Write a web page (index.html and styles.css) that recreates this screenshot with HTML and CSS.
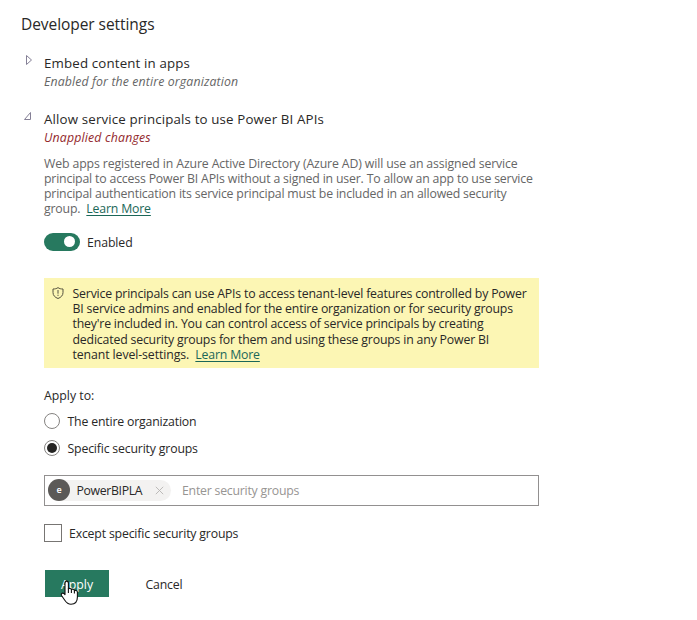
FILE: index.html
```html
<!DOCTYPE html>
<html lang="en">
<head>
<meta charset="utf-8">
<title>Developer settings</title>
<link rel="stylesheet" href="styles.css">
</head>
<body>
<main class="settings">
  <h1 class="title">Developer settings</h1>
  <section class="setting collapsed">
    <svg class="arrow" width="10" height="12" viewBox="0 0 10 12"><path d="M2.5 1.5v9L7.5 6z"/></svg>
    <div>
      <h2 class="name">Embed content in apps</h2>
      <p class="status">Enabled for the entire organization</p>
    </div>
  </section>
  <section class="setting">
    <svg class="arrow open" width="10" height="12" viewBox="0 0 10 12"><path d="M1.5 8.5h6v-7z"/></svg>
    <div class="body">
      <h2 class="name">Allow service principals to use Power BI APIs</h2>
      <p class="status changed">Unapplied changes</p>
      <p class="description"><span class="first-line">Web apps registered in Azure Active Directory (Azure AD) will use an assigned service</span><br>principal to access Power BI APIs without a signed in user. To allow an app to use service<br>principal authentication its service principal must be included in an allowed security<br>group. &nbsp;<a class="link" href="#">Learn More</a></p>
      <div class="toggle-row"><span class="toggle"></span><span class="label">Enabled</span></div>
      <div class="notice">
        <svg class="shield" width="12" height="12" viewBox="0 0 12 12"><path d="M6 .6C4.6 1.7 3 2 1 2v3.5c0 3 2 4.9 5 6 3-1.1 5-3 5-6V2C9 2 7.4 1.7 6 .6zM6 3v3.7M6 7.7v1.2"/></svg>
        <p class="notice-text">Service principals can use APIs to access tenant-level features controlled by Power<br>BI service admins and enabled for the entire organization or for security groups<br>they're included in. You can control access of service principals by creating<br>dedicated security groups for them and using these groups in any Power BI<br><span class="last-line">tenant level-settings. &nbsp;</span><a class="link" href="#">Learn More</a></p>
      </div>
      <p class="apply-to">Apply to:</p>
      <div class="choice"><span class="radio"></span><span class="label">The entire organization</span></div>
      <div class="choice"><span class="radio selected"></span><span class="label">Specific security groups</span></div>
      <div class="picker">
        <span class="chip"><span class="avatar">e</span><span class="chip-name">PowerBIPLA</span><svg width="9" height="9" viewBox="0 0 9 9"><path d="M.8.8l7.4 7.4M8.2.8L.8 8.2"/></svg></span>
        <span class="placeholder">Enter security groups</span>
      </div>
      <div class="except"><span class="checkbox"></span><span class="label">Except specific security groups</span></div>
      <div class="actions">
        <span class="button">Apply</span>
        <span class="cancel">Cancel</span>
        <svg class="cursor" width="20" height="26" viewBox="0 0 20 26"><path d="M5 14V3.2C5 .4 8.4 .4 8.4 3.2V9C9.2 7.9 11.2 8.3 11.4 9.7C12.3 8.7 14.3 9.2 14.4 10.7C15.5 9.9 17.4 10.6 17.4 12.3V17C17.4 21.5 14.8 24.200 11 24.200C7.5 24.200 6.300 22.500 4.800 20.200L1.500 15.500C.6 13.400 2.900 12 5 14.600Z"/><path d="M8.4 8.5V13M11.4 9.7V13M14.4 10.7V13.5"/></svg>
      </div>
    </div>
  </section>
</main>
</body>
</html>
```
FILE: styles.css
```css
* { box-sizing: border-box; }
body { margin: 0; min-height: 100vh; background: #fff; color: #292827; font: 12.3px/15px "Open Sans", "Noto Sans", sans-serif; letter-spacing: -.18px; }
h1, h2, p { margin: 0; font-weight: 400; }
.settings { padding: 12px 0 22px 21px; }
.title { font-size: 15.5px; line-height: 24px; letter-spacing: -.06px; }
.setting { display: flex; align-items: flex-start; }
.collapsed { margin: 17px 0 18px; height: 38px; }
.arrow { width: 10px; margin: 1px 10px 0 3px; fill: none; stroke: #858096; flex: none; }
.open { margin: 2px 11px 0 2px; }
.name { font-size: 13.3px; line-height: 20px; letter-spacing: .15px; white-space: nowrap; }
.status { color: #666; font-style: italic; line-height: 16px; padding-top: 1px; letter-spacing: .13px; white-space: nowrap; }
.changed { color: #93282c; letter-spacing: .18px; }
.body { width: 495px; }
.description { margin-top: 10px; color: #666; line-height: 15.1px; white-space: nowrap; }
.first-line { letter-spacing: -.13px; }
.link { color: #1b6758; text-underline-offset: 2px; }
.toggle-row { display: flex; align-items: center; gap: 7px; height: 18px; margin-top: 16.6px; }
.label { padding-top: 2px; }
.toggle { width: 36px; height: 18px; border-radius: 9px; background: #27795f; display: flex; align-items: center; justify-content: flex-end; padding-right: 5px; }
.toggle-row .label { letter-spacing: -.1px; }
.toggle::after { content: ""; width: 11px; height: 11px; border-radius: 50%; background: #fff; }
.notice { display: flex; margin-top: 27px; height: 90px; padding: 8px 0 0 8px; background: #fcf6b4; }
.shield { margin: 1px 8.5px 0 0; fill: none; stroke: #55523e; flex: none; }
.notice-text { line-height: 15.25px; letter-spacing: -.18px; white-space: nowrap; }
.last-line { letter-spacing: -.1px; }
.apply-to { margin-top: 20px; letter-spacing: 0; }
.choice { display: flex; align-items: center; gap: 7.5px; height: 16px; margin-top: 10px; }
.radio { width: 16px; height: 16px; border: 1px solid #858381; border-radius: 50%; display: grid; place-items: center; }
.choice + .choice { margin-top: 11px; }
.selected::after { content: ""; width: 10px; height: 10px; border-radius: 50%; background: #252423; }
.picker { display: flex; align-items: center; height: 31px; margin-top: 19px; padding-left: 3px; border: 1px solid #929090; }
.chip { display: flex; align-items: center; width: 123px; height: 21px; border-radius: 11px; background: #f3f2f1; }
.avatar { width: 22px; height: 22px; border-radius: 50%; background: #5b5957; color: #fff; font-size: 9px; font-weight: 600; line-height: 21px; text-align: center; }
.chip-name { width: 66px; margin: 0 12px 0 6.5px; letter-spacing: -.35px; }
.chip svg { fill: none; stroke: #b5b3b1; stroke-width: .9; }
.placeholder { margin-left: 11px; color: #979593; letter-spacing: -.23px; }
.except { display: flex; align-items: center; gap: 7px; margin-top: 18px; height: 18px; }
.checkbox { width: 18px; height: 18px; border: 1px solid #777573; }
.actions { position: relative; display: flex; align-items: center; margin: 28px 0 0 1px; height: 27px; }
.button { width: 64px; height: 27px; background: #27795f; color: #fff; line-height: 29px; text-align: center; letter-spacing: 0; }
.cursor { position: absolute; left: 15px; top: 10px; fill: #fff; stroke: #111; stroke-width: 1.1; stroke-linejoin: round; overflow: visible; }
.cancel { margin-left: 36.5px; padding-top: 2px; }
```
